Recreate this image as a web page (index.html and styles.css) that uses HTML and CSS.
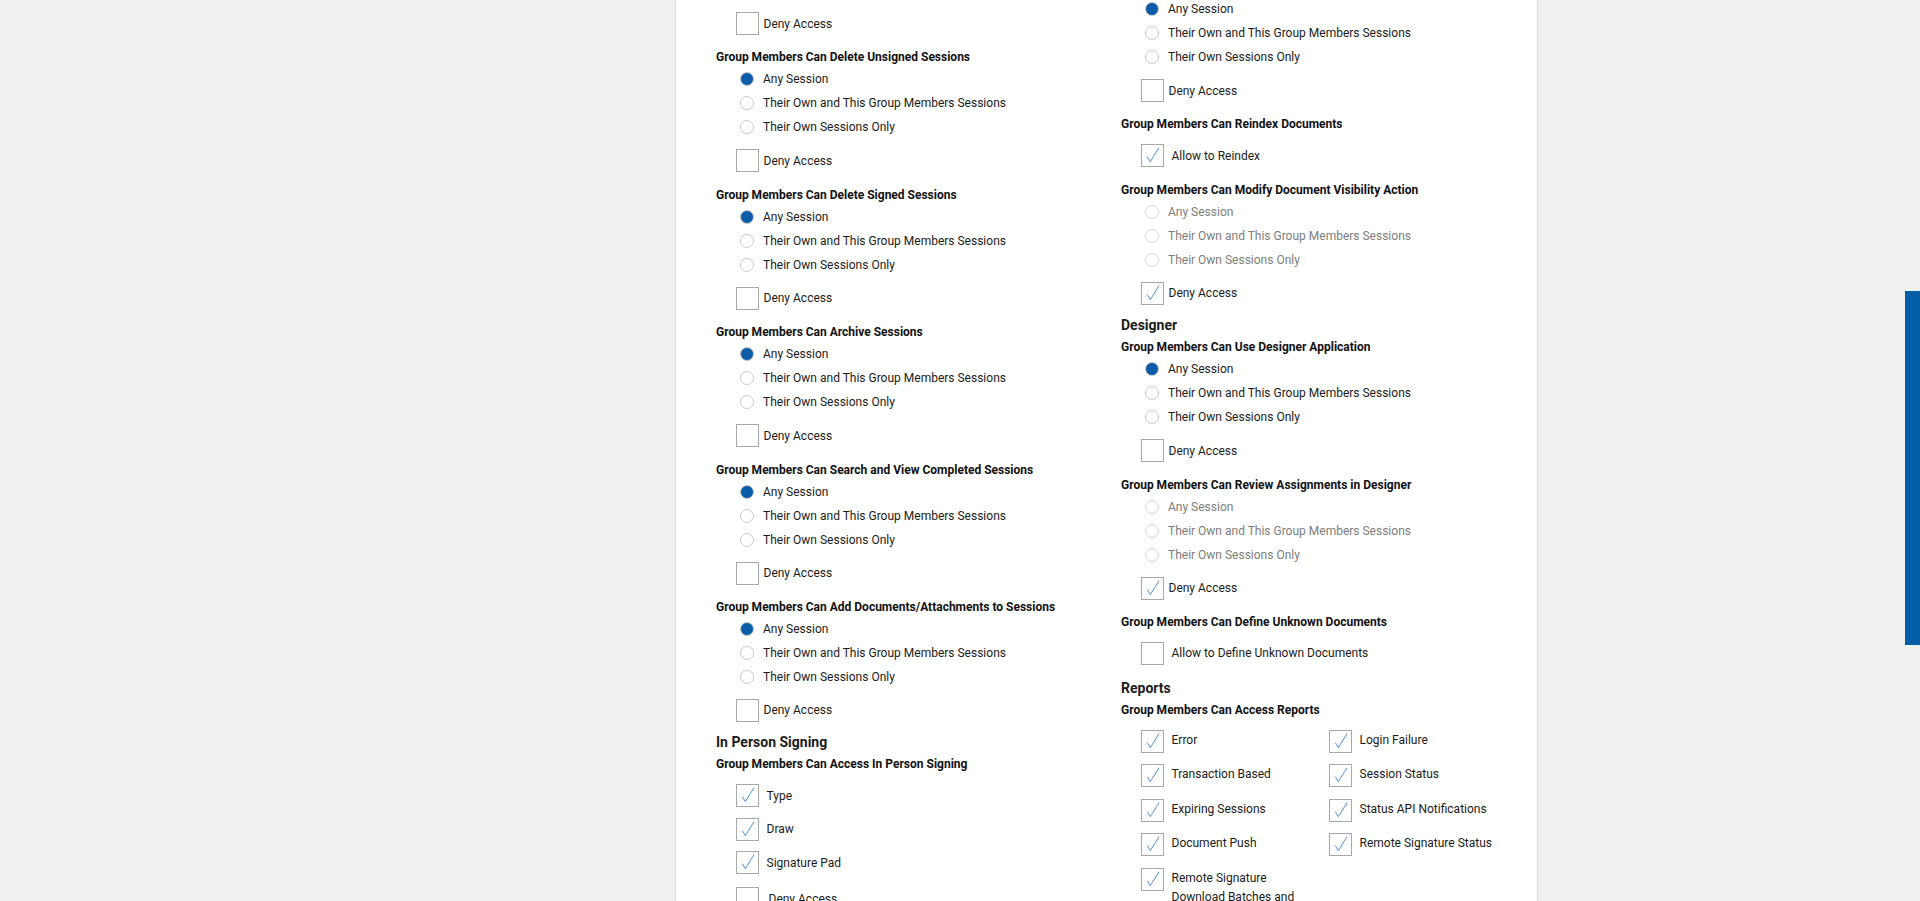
FILE: index.html
```html
<!DOCTYPE html>
<html>
<head>
<title>Group Permissions</title>
<link rel="stylesheet" href="styles.css">
</head>
<body>
	<!-- group permissions panel (page is scrolled part way down) -->
	<div class="panel">
		<div class="columns">

			<!-- left column -->
			<div class="col">
				<section class="perm">
					<h4 class="perm-title">Group Members Can Edit Sessions</h4>
					<ul class="radio-list">
						<li class="radio-row"><span class="radio on"></span>Any Session</li>
						<li class="radio-row"><span class="radio"></span>Their Own and This Group Members Sessions</li>
						<li class="radio-row"><span class="radio"></span>Their Own Sessions Only</li>
					</ul>
					<div class="check-row deny"><span class="box"></span>Deny Access</div>
				</section>

				<section class="perm">
					<h4 class="perm-title">Group Members Can Delete Unsigned Sessions</h4>
					<ul class="radio-list">
						<li class="radio-row"><span class="radio on"></span>Any Session</li>
						<li class="radio-row"><span class="radio"></span>Their Own and This Group Members Sessions</li>
						<li class="radio-row"><span class="radio"></span>Their Own Sessions Only</li>
					</ul>
					<div class="check-row deny"><span class="box"></span>Deny Access</div>
				</section>

				<section class="perm">
					<h4 class="perm-title">Group Members Can Delete Signed Sessions</h4>
					<ul class="radio-list">
						<li class="radio-row"><span class="radio on"></span>Any Session</li>
						<li class="radio-row"><span class="radio"></span>Their Own and This Group Members Sessions</li>
						<li class="radio-row"><span class="radio"></span>Their Own Sessions Only</li>
					</ul>
					<div class="check-row deny"><span class="box"></span>Deny Access</div>
				</section>

				<section class="perm">
					<h4 class="perm-title">Group Members Can Archive Sessions</h4>
					<ul class="radio-list">
						<li class="radio-row"><span class="radio on"></span>Any Session</li>
						<li class="radio-row"><span class="radio"></span>Their Own and This Group Members Sessions</li>
						<li class="radio-row"><span class="radio"></span>Their Own Sessions Only</li>
					</ul>
					<div class="check-row deny"><span class="box"></span>Deny Access</div>
				</section>

				<section class="perm">
					<h4 class="perm-title">Group Members Can Search and View Completed Sessions</h4>
					<ul class="radio-list">
						<li class="radio-row"><span class="radio on"></span>Any Session</li>
						<li class="radio-row"><span class="radio"></span>Their Own and This Group Members Sessions</li>
						<li class="radio-row"><span class="radio"></span>Their Own Sessions Only</li>
					</ul>
					<div class="check-row deny"><span class="box"></span>Deny Access</div>
				</section>

				<section class="perm">
					<h4 class="perm-title">Group Members Can Add Documents/Attachments to Sessions</h4>
					<ul class="radio-list">
						<li class="radio-row"><span class="radio on"></span>Any Session</li>
						<li class="radio-row"><span class="radio"></span>Their Own and This Group Members Sessions</li>
						<li class="radio-row"><span class="radio"></span>Their Own Sessions Only</li>
					</ul>
					<div class="check-row deny"><span class="box"></span>Deny Access</div>
				</section>

				<h3 class="group-title">In Person Signing</h3>
				<section class="perm">
					<h4 class="perm-title">Group Members Can Access In Person Signing</h4>
					<div class="check-list">
						<div class="check-row"><span class="box"><svg viewBox="0 0 21 21"><path d="M5.3 11.7 L8.3 16.7 L17 2.7"/></svg></span>Type</div>
						<div class="check-row"><span class="box"><svg viewBox="0 0 21 21"><path d="M5.3 11.7 L8.3 16.7 L17 2.7"/></svg></span>Draw</div>
						<div class="check-row"><span class="box"><svg viewBox="0 0 21 21"><path d="M5.3 11.7 L8.3 16.7 L17 2.7"/></svg></span>Signature Pad</div>
					</div>
					<div class="check-row"><span class="box"></span>Deny Access</div>
				</section>
			</div>

			<!-- right column -->
			<div class="col col-right">
				<section class="perm">
					<h4 class="perm-title">Group Members Can Download Sessions</h4>
					<ul class="radio-list">
						<li class="radio-row"><span class="radio on"></span>Any Session</li>
						<li class="radio-row"><span class="radio"></span>Their Own and This Group Members Sessions</li>
						<li class="radio-row"><span class="radio"></span>Their Own Sessions Only</li>
					</ul>
					<div class="check-row deny"><span class="box"></span>Deny Access</div>
				</section>

				<section class="perm">
					<h4 class="perm-title">Group Members Can Reindex Documents</h4>
					<div class="check-row"><span class="box"><svg viewBox="0 0 21 21"><path d="M5.3 11.7 L8.3 16.7 L17 2.7"/></svg></span>Allow to Reindex</div>
				</section>

				<section class="perm">
					<h4 class="perm-title">Group Members Can Modify Document Visibility Action</h4>
					<ul class="radio-list disabled">
						<li class="radio-row"><span class="radio"></span>Any Session</li>
						<li class="radio-row"><span class="radio"></span>Their Own and This Group Members Sessions</li>
						<li class="radio-row"><span class="radio"></span>Their Own Sessions Only</li>
					</ul>
					<div class="check-row deny"><span class="box"><svg viewBox="0 0 21 21"><path d="M5.3 11.7 L8.3 16.7 L17 2.7"/></svg></span>Deny Access</div>
				</section>

				<h3 class="group-title">Designer</h3>
				<section class="perm">
					<h4 class="perm-title">Group Members Can Use Designer Application</h4>
					<ul class="radio-list">
						<li class="radio-row"><span class="radio on"></span>Any Session</li>
						<li class="radio-row"><span class="radio"></span>Their Own and This Group Members Sessions</li>
						<li class="radio-row"><span class="radio"></span>Their Own Sessions Only</li>
					</ul>
					<div class="check-row deny"><span class="box"></span>Deny Access</div>
				</section>

				<section class="perm">
					<h4 class="perm-title">Group Members Can Review Assignments in Designer</h4>
					<ul class="radio-list disabled">
						<li class="radio-row"><span class="radio"></span>Any Session</li>
						<li class="radio-row"><span class="radio"></span>Their Own and This Group Members Sessions</li>
						<li class="radio-row"><span class="radio"></span>Their Own Sessions Only</li>
					</ul>
					<div class="check-row deny"><span class="box"><svg viewBox="0 0 21 21"><path d="M5.3 11.7 L8.3 16.7 L17 2.7"/></svg></span>Deny Access</div>
				</section>

				<section class="perm">
					<h4 class="perm-title">Group Members Can Define Unknown Documents</h4>
					<div class="check-row"><span class="box"></span>Allow to Define Unknown Documents</div>
				</section>

				<h3 class="group-title spaced">Reports</h3>
				<section class="perm">
					<h4 class="perm-title">Group Members Can Access Reports</h4>
					<div class="report-grid">
						<div class="report-item"><span class="box"><svg viewBox="0 0 21 21"><path d="M5.3 11.7 L8.3 16.7 L17 2.7"/></svg></span><span class="txt">Error</span></div>
						<div class="report-item"><span class="box"><svg viewBox="0 0 21 21"><path d="M5.3 11.7 L8.3 16.7 L17 2.7"/></svg></span><span class="txt">Login Failure</span></div>
						<div class="report-item"><span class="box"><svg viewBox="0 0 21 21"><path d="M5.3 11.7 L8.3 16.7 L17 2.7"/></svg></span><span class="txt">Transaction Based</span></div>
						<div class="report-item"><span class="box"><svg viewBox="0 0 21 21"><path d="M5.3 11.7 L8.3 16.7 L17 2.7"/></svg></span><span class="txt">Session Status</span></div>
						<div class="report-item"><span class="box"><svg viewBox="0 0 21 21"><path d="M5.3 11.7 L8.3 16.7 L17 2.7"/></svg></span><span class="txt">Expiring Sessions</span></div>
						<div class="report-item"><span class="box"><svg viewBox="0 0 21 21"><path d="M5.3 11.7 L8.3 16.7 L17 2.7"/></svg></span><span class="txt">Status API Notifications</span></div>
						<div class="report-item"><span class="box"><svg viewBox="0 0 21 21"><path d="M5.3 11.7 L8.3 16.7 L17 2.7"/></svg></span><span class="txt">Document Push</span></div>
						<div class="report-item"><span class="box"><svg viewBox="0 0 21 21"><path d="M5.3 11.7 L8.3 16.7 L17 2.7"/></svg></span><span class="txt">Remote Signature Status</span></div>
						<div class="report-item"><span class="box"><svg viewBox="0 0 21 21"><path d="M5.3 11.7 L8.3 16.7 L17 2.7"/></svg></span><span class="txt">Remote Signature Download Batches and Reports</span></div>
					</div>
				</section>
			</div>

		</div>
	</div>

	<!-- side tab pinned to the right edge -->
	<div class="sideTab"></div>
</body>
</html>
```

FILE: styles.css
```css
body {
	margin: 0;
	background-color: #f0f0f0;
	font-family: Roboto, "Liberation Sans", sans-serif;
	font-size: 12px;
	color: #1b1b1b;
	overflow: hidden;
}

.panel {
	margin-left: 676px;
	width: 861px;
	min-height: 100vh;
	background-color: #fff;
	box-shadow: 0 0 2px rgba(0, 0, 0, 0.25);
	box-sizing: border-box;
	padding-left: 40px;
}
.columns {
	display: flex;
	margin-top: -90px;
}
.col {
	width: 405px;
}
.col-right {
	padding-top: 67px;
}

.group-title {
	margin: 0 0 3px;
	font-size: 14px;
	font-weight: 700;
	line-height: 17px;
}
/* margin collapses with the checkbox row above, so this is the full gap */
.group-title.spaced {
	margin-top: 15px;
}
.perm-title {
	margin: 0;
	font-size: 12px;
	font-weight: 700;
	line-height: 20px;
	height: 20px;
	color: #111;
}

.radio-list {
	list-style: none;
	margin: 0;
	padding: 0 0 0 24px;
}
.radio-row {
	display: flex;
	align-items: center;
	gap: 9px;
	height: 24px;
}
.radio {
	width: 14px;
	height: 14px;
	border-radius: 50%;
	border: 1px solid #c9c9c9;
	box-sizing: border-box;
	background-color: #fff;
}
.radio.on {
	background-color: #0b5ca9;
}
.disabled {
	color: #7d7d7d;
}
.disabled .radio {
	border-color: #d6d6d6;
}

.check-row {
	display: flex;
	align-items: center;
	gap: 8px;
	height: 23px;
	margin: 10px 0 12.4px 19.5px;
}
.check-row.deny {
	gap: 5px;
}
.box {
	display: flex;
	flex: none;
	width: 23px;
	height: 23px;
	border: 1px solid #a9a9a9;
	box-sizing: border-box;
	background-color: #fff;
}
.box svg {
	width: 21px;
	height: 21px;
	fill: none;
	stroke: #4b94df;
	stroke-width: 1;
}

.check-list {
	display: flex;
	flex-direction: column;
	gap: 10.5px;
	margin: 10px 0 0 19.5px;
}
.check-list .check-row {
	margin: 0;
}
.check-list + .check-row {
	margin-top: 13px;
	gap: 10px;
}

.report-grid {
	display: grid;
	grid-template-columns: 188px 188px;
	row-gap: 11.4px;
	margin: 10px 0 0 19.5px;
}
.report-item {
	display: flex;
	align-items: flex-start;
	gap: 8px;
}
.report-item .txt {
	max-width: 145px;
	line-height: 19px;
	padding-top: 1px;
}

.sideTab {
	position: fixed;
	right: 0;
	top: 291px;
	width: 15px;
	height: 354px;
	background-color: #005ea8;
}
```
